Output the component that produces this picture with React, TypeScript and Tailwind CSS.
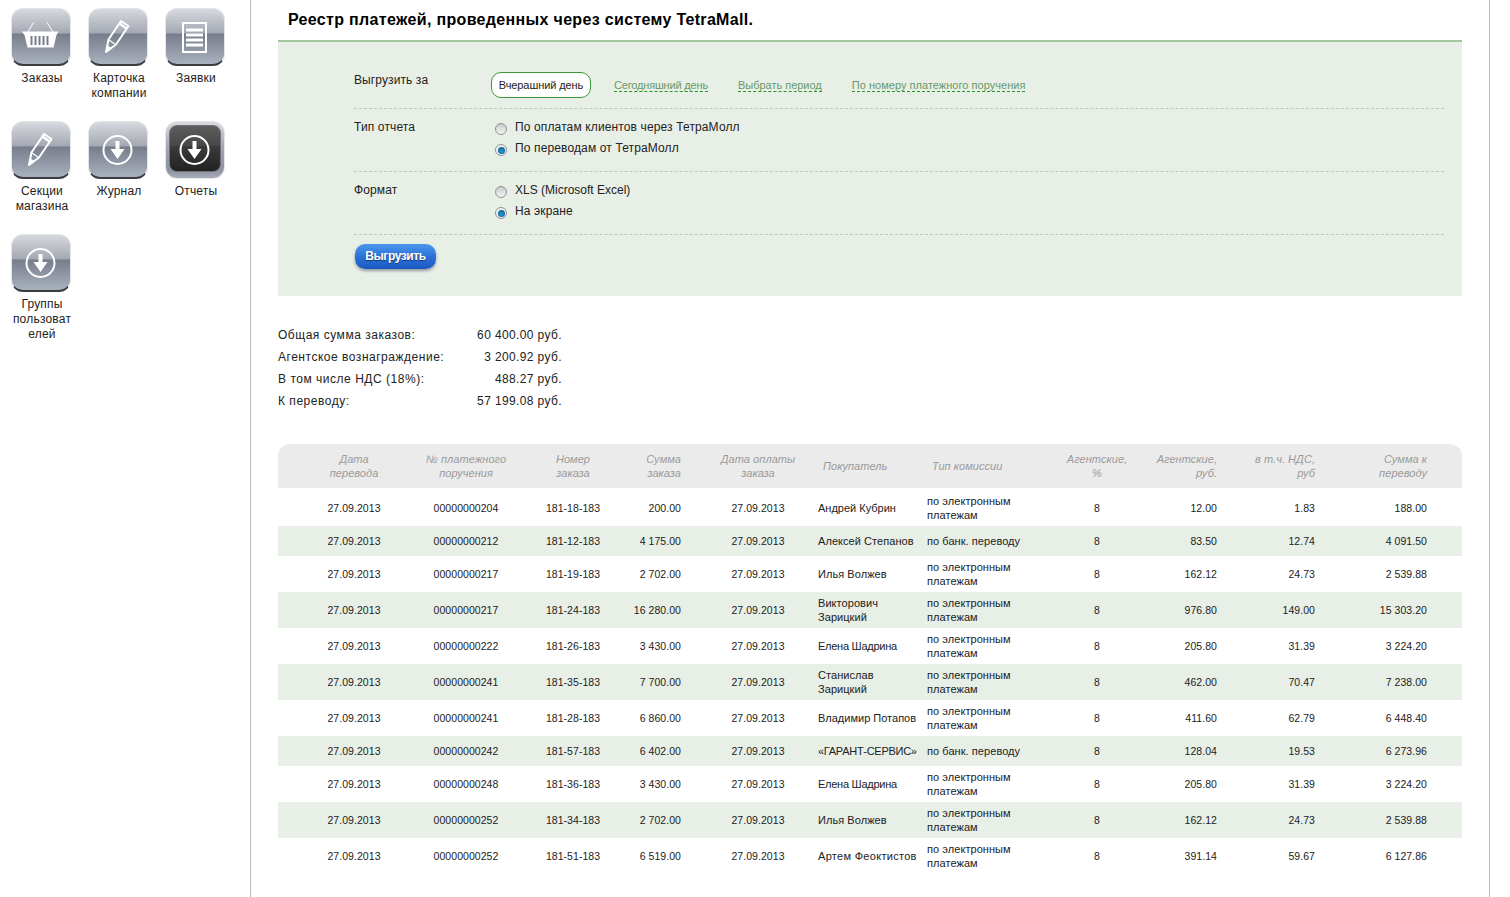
import React from "react";

const Basket = () => (
  <svg viewBox="0 0 60 58" className="absolute inset-0 w-[60px] h-[58px]">
    <path d="M17 24 L22.5 14.5 M42 24 L36 14.5" stroke="#eef0f3" strokeWidth="1.3" fill="none" />
    <path d="M11 23.5 H47.5 L45.5 27 L42.5 39.5 H16.5 L13.5 27 Z" fill="#fff" />
    <path d="M20.5 28 V37 M24.5 28 V37 M28.5 28 V37 M32.5 28 V37 M36.5 28 V37" stroke="#777d8a" strokeWidth="2" fill="none" />
  </svg>
);
const Pencil = () => (
  <svg viewBox="0 0 60 58" className="absolute inset-0 w-[60px] h-[58px]">
    <path d="M18 44 L20.5 31.5 L33 13 L40.5 18 L28 36.5 Z" fill="none" stroke="#fff" strokeWidth="2" strokeLinejoin="round" />
    <path d="M31.5 15.5 L38.5 20.5" stroke="#fff" strokeWidth="2.5" />
    <path d="M21 32 L27.5 36.5" stroke="#fff" strokeWidth="1.2" />
    <path d="M18 44.5 L19.5 37.5 L24 40.5 Z" fill="#fff" />
  </svg>
);
const Doc = () => (
  <svg viewBox="0 0 60 58" className="absolute inset-0 w-[60px] h-[58px]">
    <rect x="18" y="15" width="23" height="29" fill="none" stroke="#fff" strokeWidth="2" />
    <path d="M21 22 H38 M21 27 H38 M21 32 H38 M21 37 H38" stroke="#fff" strokeWidth="3" />
  </svg>
);
const Down = () => (
  <svg viewBox="0 0 60 58" className="absolute inset-0 w-[60px] h-[58px]">
    <circle cx="29.5" cy="29" r="14" fill="none" stroke="#fff" strokeWidth="2" />
    <path d="M27.5 20 H31.5 V28 H36.5 L29.5 38 L22.5 28 H27.5 Z" fill="#fff" />
  </svg>
);

function Tile({ label, icon, active }: { label: React.ReactNode; icon: React.ReactNode; active?: boolean }) {
  return (
    <div className="w-[60px] flex flex-col items-center">
      {active ? (
        <div className="relative w-[60px] h-[58px] rounded-[12px] border border-[#e4e5e8] bg-[linear-gradient(#d8dade,#a4a8b2_44%,#8b91a1_85%,#a7adb9)] p-[3px] pb-[6px]">
          <div className="h-full rounded-[8px] border border-[#6f7177] bg-[linear-gradient(#5d5d5d,#474747_44%,#3b3b3b_45%,#222)]" />
          <div className="absolute -inset-px">{icon}</div>
        </div>
      ) : (
        <div className="relative w-[60px] h-[58px] rounded-[12px] border border-[#e4e5e8] border-b-[#3a3c42] border-b-2 bg-[linear-gradient(#d6d9de,#a4a8b2_44%,#777d8a_45%,#aab1be)]">
          <div className="absolute -inset-px">{icon}</div>
        </div>
      )}
      <div className="mt-[5px] ml-[2px] w-[77px] text-center text-[12px] leading-[15px] text-[#222] tracking-[0.2px]">{label}</div>
    </div>
  );
}

const Radio = ({ checked }: { checked?: boolean }) => (
  <span className={`relative mt-[4px] w-[12px] h-[12px] rounded-full border border-[#8e9497] flex items-center justify-center ${checked ? "bg-[#eef1f2]" : "bg-[linear-gradient(#c9cbcc,#f4f4f4)]"}`}>
    {checked && <span className="w-[7px] h-[7px] rounded-full bg-[radial-gradient(circle_at_50%_60%,#23a0d8,#0a4a78)]" />}
  </span>
);

const RadioLine = ({ checked, children, latin }: { checked?: boolean; children: React.ReactNode; latin?: boolean }) => (
  <div className={`h-[21px] flex items-start gap-[8px] pl-[4px] text-[12px] leading-[20px] text-[#222] ${latin ? "tracking-[0px]" : "tracking-[0.13px]"}`}>
    <span className="mt-[2px]"><Radio checked={checked} /></span>
    <span>{children}</span>
  </div>
);

const Row = ({ label, children }: { label: string; children: React.ReactNode }) => (
  <div className="flex h-[63px] pt-[8px] border-b border-dashed border-[#b4cfb0]">
    <div className="w-[137px] text-[12px] leading-[20px] text-[#222] tracking-[0.13px]">{label}</div>
    <div>{children}</div>
  </div>
);

const DashLink = ({ children, cls }: { children: React.ReactNode; cls: string }) => (
  <span className={`text-[11px] leading-[13px] text-[#689a66] border-b border-dashed border-[#1f9a1f] ${cls}`}>{children}</span>
);

const Stat = ({ l, v }: { l: string; v: string }) => (
  <div className="flex justify-between h-[22px] leading-[22px]">
    <span className="tracking-[0.52px]">{l}</span>
    <span className="tracking-[0.38px]">{v}</span>
  </div>
);

type R = [string, string, string, string, React.ReactNode, string, string, string, number, string];
const E = <>по электронным<br />платежам</>;
const B = "по банк. переводу";
const rows: R[] = [
  ["00000000204", "181-18-183", "200.00", "Андрей Кубрин", E, "12.00", "1.83", "188.00", 38, "tracking-[0px]"],
  ["00000000212", "181-12-183", "4 175.00", "Алексей Степанов", B, "83.50", "12.74", "4 091.50", 30, "tracking-[0.06px]"],
  ["00000000217", "181-19-183", "2 702.00", "Илья Волжев", E, "162.12", "24.73", "2 539.88", 36, "tracking-[0.06px]"],
  ["00000000217", "181-24-183", "16 280.00", "Викторович|Зарицкий", E, "976.80", "149.00", "15 303.20", 36, "tracking-[0.06px]"],
  ["00000000222", "181-26-183", "3 430.00", "Елена Шадрина", E, "205.80", "31.39", "3 224.20", 36, "tracking-[-0.25px]"],
  ["00000000241", "181-35-183", "7 700.00", "Станислав|Зарицкий", E, "462.00", "70.47", "7 238.00", 36, "tracking-[0.06px]"],
  ["00000000241", "181-28-183", "6 860.00", "Владимир Потапов", E, "411.60", "62.79", "6 448.40", 36, "tracking-[0px]"],
  ["00000000242", "181-57-183", "6 402.00", "«ГАРАНТ-СЕРВИС»", B, "128.04", "19.53", "6 273.96", 30, "tracking-[-0.28px]"],
  ["00000000248", "181-36-183", "3 430.00", "Елена Шадрина", E, "205.80", "31.39", "3 224.20", 36, "tracking-[-0.25px]"],
  ["00000000252", "181-34-183", "2 702.00", "Илья Волжев", E, "162.12", "24.73", "2 539.88", 36, "tracking-[0.06px]"],
  ["00000000252", "181-51-183", "6 519.00", "Артем Феоктистов", E, "391.14", "59.67", "6 127.86", 36, "tracking-[0.3px]"],
];

const thBase = "font-normal italic text-[11px] text-[#9a9a9a] align-middle";

export default function App() {
  return (
    <div className="flex min-h-[897px] h-[897px] overflow-hidden bg-white font-['Liberation_Sans',Arial,sans-serif] text-[#222]">
      <aside className="w-[251px] shrink-0 border-r border-[#bdbdbd] pl-[11px] pt-[8px]">
        <div className="grid grid-cols-[60px_60px_60px] gap-x-[17px] auto-rows-[113px]">
          <Tile label="Заказы" icon={<Basket />} />
          <Tile label={<>Карточка<br />компании</>} icon={<Pencil />} />
          <Tile label="Заявки" icon={<Doc />} />
          <Tile label={<>Секции<br />магазина</>} icon={<Pencil />} />
          <Tile label="Журнал" icon={<Down />} />
          <Tile label="Отчеты" icon={<Down />} active />
          <Tile label={<>Группы<br />пользоват<br />елей</>} icon={<Down />} />
        </div>
      </aside>

      <main className="w-[1239px] shrink-0 border-r border-[#bdbdbd] pl-[27px]">
        <h1 className="h-[40px] pl-[10px] text-[16px] font-bold leading-[39px] text-black tracking-[0.33px]">
          Реестр платежей, проведенных через систему TetraMall.
        </h1>

        <section className="w-[1184px] h-[256px] border-t-2 border-[#a5c5a1] bg-[#e8efe7] pl-[76px] pr-[18px]">
          <div className="flex h-[67px] pt-[30px] border-b border-dashed border-[#b4cfb0]">
            <div className="w-[137px] -mt-[2px] text-[12px] leading-[20px] text-[#222] tracking-[0.1px]">Выгрузить за</div>
            <div className="flex items-start text-[11px]">
              <span className="h-[26px] w-[100px] rounded-[10px] border border-[#3a9a3a] bg-white text-center leading-[24px] text-[#222] tracking-[-0.08px]">Вчерашний день</span>
              <span className="ml-[23px] mt-[5px]"><DashLink cls="tracking-[-0.17px]">Сегодняшний день</DashLink></span>
              <span className="ml-[30px] mt-[5px]"><DashLink cls="tracking-[-0.02px]">Выбрать период</DashLink></span>
              <span className="ml-[30px] mt-[5px]"><DashLink cls="tracking-[0.03px]">По номеру платежного поручения</DashLink></span>
            </div>
          </div>
          <Row label="Тип отчета">
            <RadioLine>По оплатам клиентов через ТетраМолл</RadioLine>
            <RadioLine checked>По переводам от ТетраМолл</RadioLine>
          </Row>
          <Row label="Формат">
            <RadioLine latin>XLS (Microsoft Excel)</RadioLine>
            <RadioLine checked>На экране</RadioLine>
          </Row>
          <button className="mt-[9px] ml-[1px] block h-[25px] w-[81px] pb-[2px] rounded-[10px] bg-[linear-gradient(#4b97ec,#2a6fd8_55%,#1c58c0)] text-[12px] font-bold text-white tracking-[-0.4px] shadow-[0_2px_3px_rgba(80,90,100,0.55)] [text-shadow:0_1px_1px_rgba(0,0,0,0.5)]">
            Выгрузить
          </button>
        </section>

        <div className="mt-[28px] w-[284px] text-[12px] text-[#222]">
          <Stat l="Общая сумма заказов:" v="60 400.00 руб." />
          <Stat l="Агентское вознаграждение:" v="3 200.92 руб." />
          <Stat l="В том числе НДС (18%):" v="488.27 руб." />
          <Stat l="К переводу:" v="57 199.08 руб." />
        </div>

        <table className="mt-[32px] w-[1184px] table-fixed border-collapse text-[10.5px] leading-[14px] text-[#222] tracking-[0.05px]">
          <colgroup>
            <col className="w-[132px]" />
            <col className="w-[112px]" />
            <col className="w-[102px]" />
            <col className="w-[67px]" />
            <col className="w-[117px]" />
            <col className="w-[114px]" />
            <col className="w-[118px]" />
            <col className="w-[114px]" />
            <col className="w-[73px]" />
            <col className="w-[98px]" />
            <col className="w-[137px]" />
          </colgroup>
          <thead>
            <tr className="h-[44px] bg-[#ebebeb]">
              <th className={`${thBase} rounded-tl-[12px] pl-[20px] text-center`}>Дата<br />перевода</th>
              <th className={`${thBase} text-center whitespace-nowrap`}>№ платежного<br />поручения</th>
              <th className={`${thBase} text-center`}>Номер<br />заказа</th>
              <th className={`${thBase} pr-[10px] text-right`}>Сумма<br />заказа</th>
              <th className={`${thBase} pl-[17px] text-center whitespace-nowrap`}>Дата оплаты<br />заказа</th>
              <th className={`${thBase} pl-[15px] text-left`}>Покупатель</th>
              <th className={`${thBase} pl-[10px] text-left`}>Тип комиссии</th>
              <th className={`${thBase} text-center`}>Агентские,<br />%</th>
              <th className={`${thBase} pr-[10px] text-right`}>Агентские,<br />руб.</th>
              <th className={`${thBase} pr-[10px] text-right`}>в т.ч. НДС,<br />руб</th>
              <th className={`${thBase} rounded-tr-[12px] pr-[35px] text-right`}>Сумма к<br />переводу</th>
            </tr>
          </thead>
          <tbody>
            {rows.map((r, i) => (
              <tr key={i} className={`${i % 2 === 1 ? "bg-[#e8efe7]" : "bg-white"} ${i === 0 ? "[&>td]:pt-[2px]" : ""}`} style={{ height: r[8] }}>
                <td className="pl-[20px] text-center">27.09.2013</td>
                <td className="text-center">{r[0]}</td>
                <td className="text-center">{r[1]}</td>
                <td className="pr-[10px] text-right whitespace-nowrap">{r[2]}</td>
                <td className="pl-[17px] text-center">27.09.2013</td>
                <td className={`pl-[10px] whitespace-nowrap text-[11px] ${r[9]}`}>
                  {r[3].split("|").map((s, j) => (
                    <div key={j}>{s}</div>
                  ))}
                </td>
                <td className="pl-[5px] text-[11px] tracking-[0.06px]">{r[4]}</td>
                <td className="text-center">8</td>
                <td className="pr-[10px] text-right">{r[5]}</td>
                <td className="pr-[10px] text-right">{r[6]}</td>
                <td className="pr-[35px] text-right">{r[7]}</td>
              </tr>
            ))}
          </tbody>
        </table>
      </main>
    </div>
  );
}
